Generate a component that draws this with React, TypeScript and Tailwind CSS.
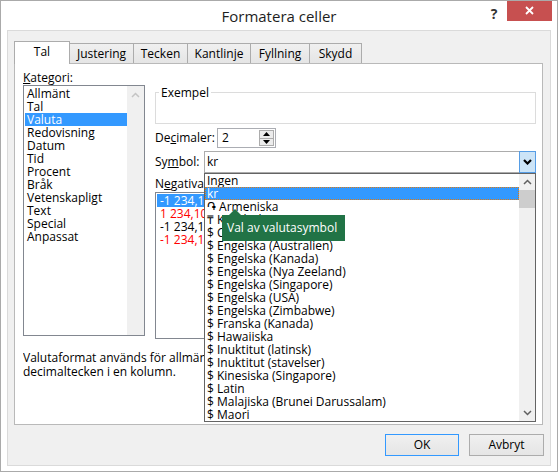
import React from 'react'

const categories = [
  'Allmänt',
  'Tal',
  'Valuta',
  'Redovisning',
  'Datum',
  'Tid',
  'Procent',
  'Bråk',
  'Vetenskapligt',
  'Text',
  'Special',
  'Anpassat',
]

const symbols = [
  'Ingen',
  'kr',
  '֏ Armeniska',
  '₸ Kazakiska',
  '$ Cherokee',
  '$ Engelska (Australien)',
  '$ Engelska (Kanada)',
  '$ Engelska (Nya Zeeland)',
  '$ Engelska (Singapore)',
  '$ Engelska (USA)',
  '$ Engelska (Zimbabwe)',
  '$ Franska (Kanada)',
  '$ Hawaiiska',
  '$ Inuktitut (latinsk)',
  '$ Inuktitut (stavelser)',
  '$ Kinesiska (Singapore)',
  '$ Latin',
  '$ Malajiska (Brunei Darussalam)',
  '$ Maori',
]

const negatives = [
  { text: '-1 234,10 kr', cls: 'bg-[#3399ff] text-white' },
  { text: '1 234,10 kr', cls: 'text-[#ff0000]' },
  { text: '-1 234,10 kr', cls: 'text-black' },
  { text: '-1 234,10 kr', cls: 'text-[#ff0000]' },
]

const tabs = [
  { label: 'Tal', cls: 'w-[56px]' },
  { label: 'Justering', cls: 'w-[65px]' },
  { label: 'Tecken', cls: 'w-[55px]' },
  { label: 'Kantlinje', cls: 'w-[64px]' },
  { label: 'Fyllning', cls: 'w-[60px]' },
  { label: 'Skydd', cls: 'w-[53px]' },
]

function Chevron({ up, color, bold }: { up?: boolean; color: string; bold?: boolean }) {
  return (
    <svg width="9" height="6" viewBox="0 0 9 6">
      <polyline
        points={up ? '1,5 4.5,1.5 8,5' : '1,1 4.5,4.5 8,1'}
        fill="none"
        stroke={color}
        strokeWidth={bold ? 2.2 : 1.5}
      />
    </svg>
  )
}

function SpinBox() {
  return (
    <div className="flex w-[59px] h-[20px] border border-[#abadb3] bg-white">
      <span className="flex-1 pl-[4px] leading-[18px]">2</span>
      <div className="flex flex-col w-[15px] my-px mr-px">
        <div className="flex-1 flex items-center justify-center border border-[#acacac] bg-[#ececec]">
          <svg width="7" height="4" viewBox="0 0 7 4">
            <polygon points="0,4 3.5,0 7,4" fill="#000" />
          </svg>
        </div>
        <div className="flex-1 flex items-center justify-center border border-t-0 border-[#acacac] bg-[#ececec]">
          <svg width="7" height="4" viewBox="0 0 7 4">
            <polygon points="0,0 3.5,4 7,0" fill="#000" />
          </svg>
        </div>
      </div>
    </div>
  )
}

function SymbolCombo() {
  return (
    <div className="relative flex-1 h-[22px]">
      <div className="flex h-full border border-[#acacac] bg-white">
        <span className="flex-1 pl-[2px] leading-[20px]">kr</span>
        <div className="-my-px -mr-px w-[17px] h-[22px] flex items-center justify-center border border-[#569de5] bg-[#cce4f7]">
          <Chevron color="#000" bold />
        </div>
      </div>
      {/* open dropdown list */}
      <div className="absolute left-0 right-0 top-full z-20 h-[249px] flex border border-[#646464] bg-white">
        <div className="flex-1 flex flex-col">
          {symbols.map((s, i) => (
            <div
              key={s}
              className={
                i === 1
                  ? 'h-[13px] leading-[11px] pl-[1px] bg-[#3399ff] text-white border border-dotted border-[#e07a10]'
                  : 'h-[13px] leading-[13px] pl-[2px] whitespace-nowrap'
              }
            >
              {s}
            </div>
          ))}
        </div>
        <div className="w-[16px] flex flex-col bg-[#f0f0f0]">
          <div className="h-[16px] flex items-center justify-center">
            <Chevron up color="#606060" />
          </div>
          <div className="h-[18px] bg-[#cdcdcd]" />
          <div className="flex-1" />
          <div className="h-[16px] flex items-center justify-center">
            <Chevron color="#606060" />
          </div>
        </div>
      </div>
    </div>
  )
}

export default function App() {
  return (
    <div className="relative w-[558px] h-[472px] bg-white border border-[#aaaaaa] overflow-hidden flex flex-col font-['Segoe_UI','Open_Sans',sans-serif] text-[12px] text-black">
      {/* title bar */}
      <div className="flex h-[29px] shrink-0">
        <div className="w-[76px]" />
        <div className="flex-1 text-center text-[15px] leading-[29px] pt-px text-[#1e1e1e]">Formatera celler</div>
        <div className="w-[26px] text-center text-[14px] font-bold leading-[26px] text-[#333]">?</div>
        <div className="w-[45px] h-[21px] -mt-px bg-[#c75050] flex items-center justify-center">
          <svg width="9" height="9" viewBox="0 0 9 9">
            <path d="M1 1 L8 8 M8 1 L1 8" stroke="#fff" strokeWidth="1.8" />
          </svg>
        </div>
        <div className="w-[5px]" />
      </div>

      {/* client area */}
      <div className="mx-[6px] h-[436px] bg-[#f0f0f0] border border-[#dadada] flex flex-col pl-[6px] pt-[10px]">
        {/* tabs */}
        <div className="flex items-end h-[22px]">
          {tabs.map((t, i) =>
            i === 0 ? (
              <div
                key={t.label}
                className={`${t.cls} relative z-10 h-[23px] -mb-px bg-white border border-b-0 border-[#acacac] text-center leading-[20px]`}
              >
                {t.label}
              </div>
            ) : (
              <div
                key={t.label}
                className={`${t.cls} -ml-px h-[20px] bg-gradient-to-b from-[#f0f0f0] to-[#e5e5e5] border border-b-0 border-[#acacac] text-center leading-[19px]`}
              >
                {t.label}
              </div>
            )
          )}
        </div>

        {/* tab panel */}
        <div className="w-[529px] h-[362px] bg-white border border-[#b9b9b9] flex flex-col">
          <div className="flex pl-[8px] pt-[6px]">
            {/* left column */}
            <div className="w-[122px] flex flex-col">
              <div className="h-[15px] leading-[15px]">
                <span className="underline">K</span>ategori:
              </div>
              <div className="h-[251px] flex border border-[#828790] bg-white">
                <div className="flex-1 flex flex-col pt-px pl-px">
                  {categories.map((c) => (
                    <div
                      key={c}
                      className={
                        c === 'Valuta'
                          ? 'h-[13px] leading-[13px] pl-[2px] bg-[#3399ff] text-white'
                          : 'h-[13px] leading-[13px] pl-[2px]'
                      }
                    >
                      {c}
                    </div>
                  ))}
                </div>
                <div className="w-[17px] bg-[#f0f0f0] flex flex-col items-center pt-[6px]">
                  <Chevron up color="#c4c4c4" />
                </div>
              </div>
            </div>

            {/* right column */}
            <div className="ml-[10px] w-[381px] flex flex-col">
              <div className="mt-[22px] h-[32px] border border-[#dcdcdc]">
                <span className="block w-fit -mt-[8px] ml-[3px] px-[2px] bg-white leading-[15px]">Exempel</span>
              </div>
              <div className="mt-[4px] h-[20px] flex items-center">
                <span className="w-[62px]">
                  De<span className="underline">c</span>imaler:
                </span>
                <SpinBox />
              </div>
              <div className="mt-[3px] h-[22px] flex items-center">
                <span className="w-[49px]">
                  Sy<span className="underline">m</span>bol:
                </span>
                <SymbolCombo />
              </div>
              <div className="mt-[3px] h-[15px] leading-[15px]">
                N<span className="underline">e</span>gativa tal:
              </div>
              <div className="mt-px h-[147px] border border-[#828790] bg-white flex flex-col pt-px px-px">
                {negatives.map((n, i) => (
                  <div key={i} className={`h-[13px] leading-[13px] pl-[3px] ${n.cls}`}>
                    {n.text}
                  </div>
                ))}
              </div>
            </div>
          </div>

          <p className="ml-[8px] w-[480px] overflow-hidden mt-[12px] leading-[14px] whitespace-nowrap">
            Valutaformat används för allmänna monetära värden. Använd Redovisning om du vill justera
            <br />
            decimaltecken i en kolumn.
          </p>
        </div>

        {/* footer buttons */}
        <div className="w-[530px] mt-[9px] flex justify-end gap-[10px]">
          <button className="w-[74px] h-[22px] border border-[#3399ff] bg-gradient-to-b from-[#f0f0f0] to-[#e5e5e5]">
            OK
          </button>
          <button className="w-[75px] h-[22px] border border-[#acacac] bg-gradient-to-b from-[#f0f0f0] to-[#e5e5e5]">
            Avbryt
          </button>
        </div>
      </div>

      {/* hover tooltip */}
      <div className="absolute left-[221px] top-[214px] z-30 w-[123px] h-[26px] bg-[#217346] text-white text-[12px] leading-[26px] pl-[5px] whitespace-nowrap">
        <div className="absolute -top-[6px] left-[7px] w-0 h-0 border-l-[6px] border-r-[6px] border-b-[6px] border-l-transparent border-r-transparent border-b-[#217346]" />
        Val av valutasymbol
      </div>
    </div>
  )
}
